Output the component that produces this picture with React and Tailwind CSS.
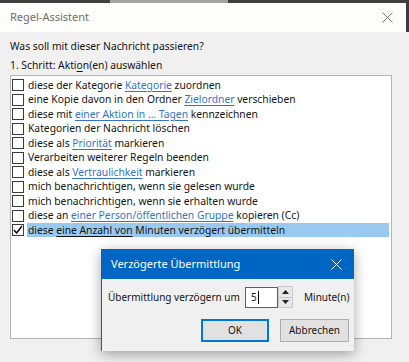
import React from "react";

const rows = [
  { parts: ["diese der Kategorie ", { link: "Kategorie" }, " zuordnen"] },
  { parts: ["eine Kopie davon in den Ordner ", { link: "Zielordner" }, " verschieben"] },
  { parts: ["diese mit ", { link: "einer Aktion in ... Tagen" }, " kennzeichnen"] },
  { parts: ["Kategorien der Nachricht löschen"] },
  { parts: ["diese als ", { link: "Priorität" }, " markieren"] },
  { parts: ["Verarbeiten weiterer Regeln beenden"] },
  { parts: ["diese als ", { link: "Vertraulichkeit" }, " markieren"] },
  { parts: ["mich benachrichtigen, wenn sie gelesen wurde"] },
  { parts: ["mich benachrichtigen, wenn sie erhalten wurde"] },
  { parts: ["diese an ", { link: "einer Person/öffentlichen Gruppe" }, " kopieren (Cc)"] },
  { parts: ["diese ", { link: "eine Anzahl von" }, " Minuten verzögert übermitteln"], checked: true },
];

const CloseIcon = ({ className }) => (
  <svg width="11" height="11" viewBox="0 0 11 11" className={className}>
    <path d="M0.5 0.5 L10.5 10.5 M10.5 0.5 L0.5 10.5" stroke="currentColor" strokeWidth="1" />
  </svg>
);

const Row = ({ row }) => (
  <div className="flex items-center h-[14.5px]">
    <div className="w-[12px] h-[12px] ml-[1px] border border-[#3a3a3a] bg-white flex items-center justify-center">
      {row.checked && (
        <svg width="10" height="10" viewBox="0 0 10 10">
          <path d="M1 5 L3.6 8 L9 1" stroke="#111" strokeWidth="1.5" fill="none" />
        </svg>
      )}
    </div>
    <div
      className={`ml-[3px] h-[14px] flex items-center pl-[1px] ${
        row.checked ? "bg-[#99c9ef] w-[362px]" : ""
      }`}
    >
      {row.parts.map((p, i) =>
        typeof p === "string" ? (
          <span key={i} className="whitespace-pre">{p}</span>
        ) : (
          <span
            key={i}
            className={`whitespace-pre underline underline-offset-[1.5px] ${
              row.checked ? "text-[#111]" : "text-[#3473c4]"
            }`}
          >
            {p.link}
          </span>
        )
      )}
    </div>
  </div>
);

export default function App() {
  return (
    <div className="relative w-[409px] h-[362px] overflow-hidden bg-[#f0f0f0] text-[10.3px] text-[#141414] font-['Noto_Sans',sans-serif]">
      {/* desktop strip on top */}
      <div className="flex h-[3px]">
        <div className="w-[110px] bg-[#3f3f3f]" />
        <div className="w-[118px] bg-[#a3a3a3]" />
        <div className="flex-1 bg-[#3f3f3f]" />
      </div>

      <div className="flex">
        <div className="w-[406px]">
          {/* title bar */}
          <div className="h-[29px] bg-[#fdfdfb] flex items-center justify-between pl-[10px] pr-[13px]">
            <span className="text-[#6d6d6d] text-[11px]">Regel-Assistent</span>
            <CloseIcon className="text-[#808080]" />
          </div>

          {/* body */}
          <div className="px-[10px] pt-[6px]">
            <div className="h-[18px] flex items-center">Was soll mit dieser Nachricht passieren?</div>
            <div className="h-[16px] flex items-center mt-[2px]">
              <span className="whitespace-pre">1. Schritt: Akti</span>
              <span className="underline underline-offset-[1.5px]">o</span>
              <span className="whitespace-pre">n(en) auswählen</span>
            </div>
            <div className="mt-[1px] w-[382px] h-[264px] border border-[#b4b4b4] bg-white pt-[2px]">
              {rows.map((r, i) => (
                <Row key={i} row={r} />
              ))}
            </div>
          </div>
        </div>
        <div className="w-[3px] h-[29px] bg-[#3f3a44]" />
      </div>

      {/* modal dialog */}
      <div className="absolute left-[101px] top-[249px] w-[253px] h-[102px] bg-[#f0f0f0] border-l border-[#0066c4] shadow-[0_3px_12px_rgba(0,0,0,0.35)]">
        <div className="h-[30px] bg-[#0066c4] flex items-center justify-between pl-[9px] pr-[12px] text-white">
          <span className="text-[11px]">Verzögerte Übermittlung</span>
          <CloseIcon className="text-white" />
        </div>
        <div className="flex items-center mt-[7px] pl-[6px] h-[22px] text-[10px]">
          <span className="w-[137px] whitespace-nowrap">Übermittlung verzögern um</span>
          <div className="w-[33px] h-[21px] border border-[#0078d7] bg-white flex items-center pl-[5px]">
            <span>5</span>
            <span className="w-[1px] h-[13px] bg-black ml-[1px]" />
          </div>
          <div className="w-[15px] h-[22px] border border-[#c8c8c8] bg-[#e8e8e8] flex flex-col">
            <div className="flex-1 flex items-center justify-center border-b border-[#c8c8c8]">
              <svg width="7" height="4" viewBox="0 0 7 4"><path d="M0 4 L3.5 0 L7 4 Z" fill="#222" /></svg>
            </div>
            <div className="flex-1 flex items-center justify-center">
              <svg width="7" height="4" viewBox="0 0 7 4"><path d="M0 0 L3.5 4 L7 0 Z" fill="#222" /></svg>
            </div>
          </div>
          <span className="ml-[11px]">Minute(n)</span>
        </div>
        <div className="flex justify-end gap-[11px] pr-[5px] mt-[11px] text-[10px]">
          <button className="w-[68px] h-[23px] border-2 border-[#0078d7] bg-[#e1e1e1]">OK</button>
          <button className="w-[69px] h-[23px] border border-[#adadad] bg-[#e1e1e1]">Abbrechen</button>
        </div>
      </div>
    </div>
  );
}
